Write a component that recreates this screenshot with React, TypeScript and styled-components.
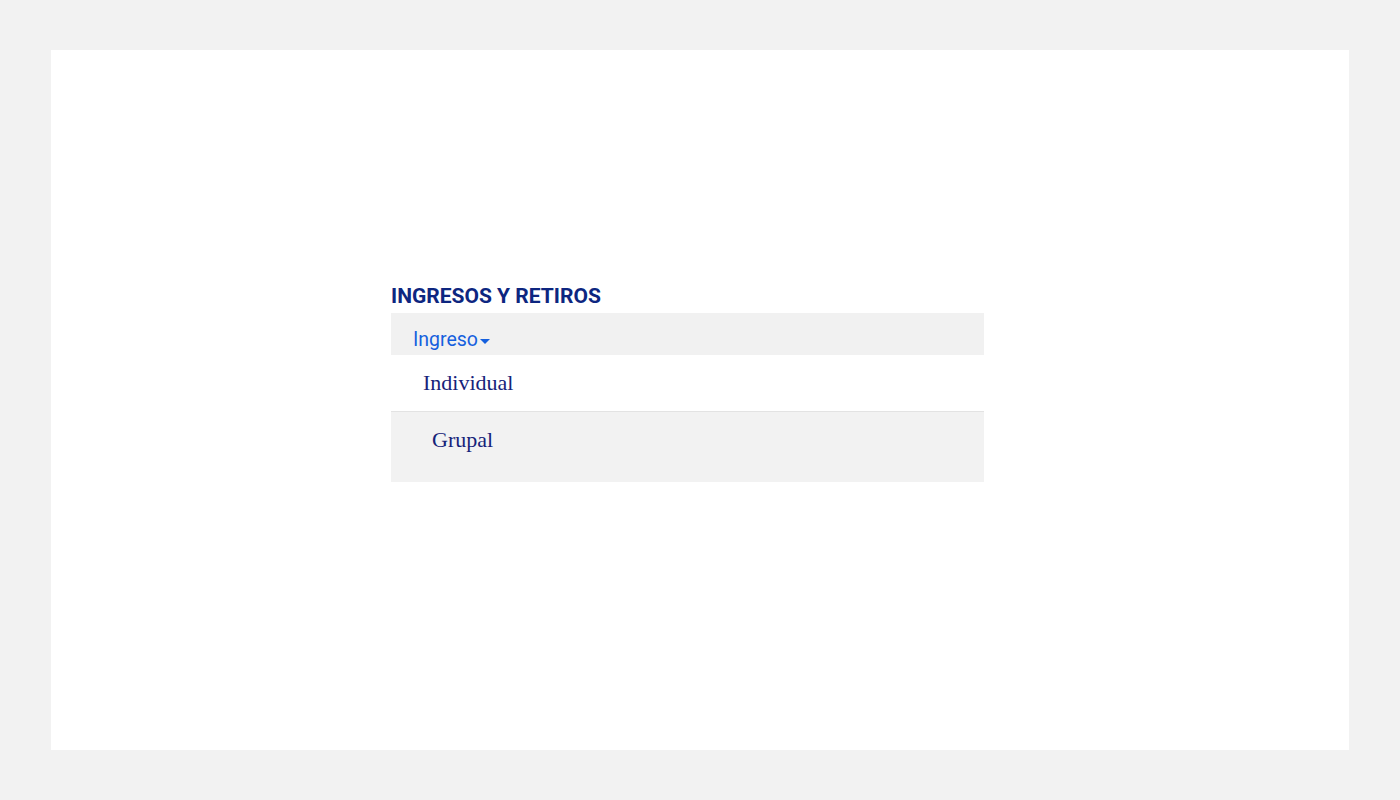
import React from "react";
import styled, { createGlobalStyle } from "styled-components";

const Global = createGlobalStyle`
  html, body { margin: 0; padding: 0; background: #f2f2f2; }
  body { width: 1400px; height: 800px; }
`;

const Page = styled.div`
  padding: 50px 51px;
  box-sizing: border-box;
  height: 800px;
`;

const Card = styled.div`
  background: #ffffff;
  height: 700px;
  padding: 234px 0 0 340px;
  box-sizing: border-box;
`;

const Panel = styled.section`
  width: 593px;
`;

const Title = styled.h2`
  margin: 0 0 5px;
  font-family: Roboto, "Liberation Sans", sans-serif;
  font-weight: 700;
  font-size: 21px;
  line-height: 24px;
  color: #0d2680;
  padding-top: 1px;
  height: 24px;
  box-sizing: content-box;
  margin-top: -1px;
`;

const TabBar = styled.div`
  background: #f1f1f1;
  height: 42px;
  padding: 16px 0 0 22px;
  box-sizing: border-box;
`;

const Tab = styled.span`
  display: inline-flex;
  align-items: center;
  gap: 2px;
  font-family: Roboto, "Liberation Sans", sans-serif;
  font-size: 19.5px;
  line-height: 22px;
  color: #1560de;
`;

const Caret = styled.span`
  width: 0;
  height: 0;
  border-left: 5px solid transparent;
  border-right: 5px solid transparent;
  border-top: 5px solid #1560de;
  margin-top: 3px;
`;

const Option = styled.div<{ $alt?: boolean; $indent: number }>`
  font-family: "Liberation Serif", "Times New Roman", serif;
  font-size: 22px;
  line-height: 26px;
  color: #16237a;
  padding: ${(p) => (p.$alt ? "15px 0 29px" : "15px 0 15px")};
  padding-left: ${(p) => p.$indent}px;
  background: ${(p) => (p.$alt ? "#f2f2f2" : "#ffffff")};
  border-top: ${(p) => (p.$alt ? "1px solid #e3e3e3" : "none")};
`;

export default function App() {
  return (
    <>
      <Global />
      <Page>
        <Card>
          <Panel>
            <Title>INGRESOS Y RETIROS</Title>
            <TabBar>
              <Tab>
                Ingreso
                <Caret />
              </Tab>
            </TabBar>
            <Option $indent={32}>Individual</Option>
            <Option $alt $indent={41}>Grupal</Option>
          </Panel>
        </Card>
      </Page>
    </>
  );
}
